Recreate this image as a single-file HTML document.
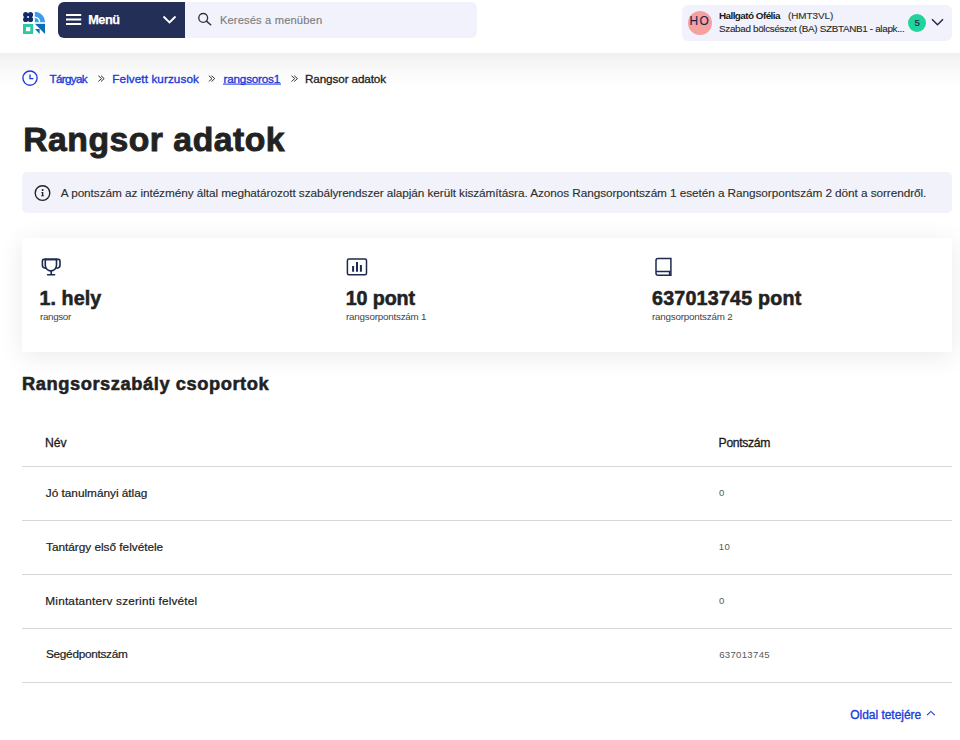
<!DOCTYPE html>
<html><head><meta charset="utf-8">
<style>
*{box-sizing:border-box;margin:0;padding:0}
html,body{width:960px;height:740px;overflow:hidden;background:#fff;font-family:"Liberation Sans",sans-serif;color:#222}
.t{position:absolute;white-space:nowrap;line-height:1}
svg{position:absolute;left:0;top:0;overflow:visible}
#hdr{position:absolute;left:0;top:0;width:960px;height:53px;background:#fff}
#shd{position:absolute;left:0;top:53px;width:960px;height:34px;background:linear-gradient(#f0f0f0,#f7f7f7 35%,#fcfcfc 70%,#fff)}
#menu{position:absolute;left:58px;top:2px;width:127px;height:36px;background:#232f56;border-radius:6px 0 0 6px}
#search{position:absolute;left:185px;top:2px;width:292px;height:36px;background:#f1f2fb;border-radius:0 6px 6px 0}
#user{position:absolute;left:682px;top:5px;width:270px;height:36px;background:#f1f2fb;border-radius:6px}
#info{position:absolute;left:22px;top:172px;width:930px;height:41px;background:#f1f2fa;border-radius:5px}
#card{position:absolute;left:22px;top:238px;width:930px;height:114px;background:#fff;box-shadow:0 4px 24px rgba(0,0,0,0.085)}
.line{position:absolute;left:22px;width:930px;height:1px;background:#d6d6d6}
</style></head><body>
<div id="hdr">
  <div id="menu"></div>
  <div id="search"></div>
  <div id="user"></div>
</div>
<div id="shd"></div>
<div id="info"></div>
<div id="card"></div>
<div class="line" style="top:466px"></div>
<div class="line" style="top:520px"></div>
<div class="line" style="top:574px"></div>
<div class="line" style="top:628px"></div>
<div class="line" style="top:682px"></div>
<svg width="960" height="740">
  <!-- logo -->
  <g fill="#13296b">
    <circle cx="25.7" cy="14.7" r="2.6"/><circle cx="30.5" cy="14.7" r="2.6"/>
    <circle cx="25.7" cy="19.4" r="2.6"/><circle cx="30.5" cy="19.4" r="2.6"/>
    <rect x="25.7" y="14.7" width="4.8" height="4.7"/>
  </g>
  <circle cx="28.1" cy="17.05" r="0.95" fill="#fff"/>
  <path d="M34.8 11.8 A10.2 10.2 0 0 1 45 22 L34.8 22 Z" fill="#3c9dea"/>
  <path d="M34.8 16.5 A5.5 5.5 0 0 1 40.3 22 L38.8 22 A4 4 0 0 0 34.8 18 Z" fill="#fff"/>
  <rect x="34.8" y="22" width="10.2" height="1.8" fill="#d3e3f1"/>
  <rect x="23" y="24" width="10.2" height="10" fill="#2dcaa1"/>
  <rect x="26" y="27" width="4.3" height="4.2" fill="#fff"/>
  <path d="M35.1 24 L45 24 L45 33.9 Z" fill="#0b6db6"/>
  <path d="M35.1 29 L39.6 29 L39.6 34 Z" fill="#0b6db6"/>
  <!-- hamburger -->
  <path d="M66 15.1 H81.2 M66 19.5 H81.2 M66 23.9 H81.2" stroke="#fff" stroke-width="2"/>
  <path d="M163.5 16.5 L169.5 22.5 L175.5 16.5" fill="none" stroke="#fff" stroke-width="1.9"/>
  <!-- search icon -->
  <circle cx="203.2" cy="17.9" r="4.4" fill="none" stroke="#333" stroke-width="1.35"/>
  <path d="M206.4 21.1 L210.7 24.8" stroke="#333" stroke-width="1.5" stroke-linecap="round"/>
  <!-- avatar -->
  <circle cx="700" cy="23" r="12" fill="#f4a19f"/>
  <circle cx="917" cy="23" r="9" fill="#1fd39b"/>
  <path d="M932 19.3 L937.5 24.8 L943 19.3" fill="none" stroke="#222a4a" stroke-width="1.45"/>
  <!-- clock -->
  <circle cx="30" cy="78.1" r="7.1" fill="none" stroke="#1a3bdb" stroke-width="1.35"/>
  <path d="M30 74.4 V78.7 H33.4" fill="none" stroke="#1a3bdb" stroke-width="1.3"/>
  <!-- separators -->
  <g fill="none" stroke="#333" stroke-width="1.0">
    <path d="M98.3 75.7 L101.5 78.6 L98.3 81.5 M101.0 75.7 L104.2 78.6 L101.0 81.5"/>
    <path d="M208.8 75.7 L212.0 78.6 L208.8 81.5 M211.5 75.7 L214.7 78.6 L211.5 81.5"/>
    <path d="M291.5 75.7 L294.7 78.6 L291.5 81.5 M294.2 75.7 L297.4 78.6 L294.2 81.5"/>
  </g>
  <rect x="223" y="83.6" width="58" height="1" fill="#1a3bdb"/>
  <!-- info icon -->
  <circle cx="42.5" cy="193" r="7.3" fill="none" stroke="#222" stroke-width="1.35"/>
  <circle cx="42.6" cy="189.9" r="1" fill="#222"/>
  <path d="M41.3 191.9 H43.3 V195.4 H44 V196.3 H41 V195.4 H41.9 V192.7 H41.3 Z" fill="#222"/>
  <!-- trophy -->
  <g fill="none" stroke="#1e2a50" stroke-width="1.6" stroke-linejoin="round" stroke-linecap="round">
    <path d="M45.3 259.4 H58.5 Q60 259.4 60 260.9 V265.3 C60 267 59 268 57 268.2"/>
    <path d="M56.5 259.4 H43.9 Q42.4 259.4 42.4 260.9 V265.3 C42.4 267 43.4 268 45.4 268.2"/>
    <path d="M45.3 259.4 V265.3 A5.6 5.6 0 0 0 56.5 265.3 V259.4"/>
    <path d="M51.2 270.9 V274.7 M47.6 274.7 H54.6"/>
  </g>
  <!-- chart -->
  <rect x="347.4" y="259.1" width="19.1" height="15.6" rx="1.5" fill="none" stroke="#1e2a50" stroke-width="1.5"/>
  <path d="M353.1 266.1 V271.7 M357 262.1 V271.7 M360.9 265.1 V271.7" stroke="#1e2a50" stroke-width="2"/>
  <!-- book -->
  <g fill="none" stroke="#1e2a50" stroke-width="1.5" stroke-linejoin="miter">
    <path d="M658 258.4 H670.9 V275.3 H658 A2 2 0 0 1 656 273.3 V260.4 A2 2 0 0 1 658 258.4 Z"/>
    <path d="M656 271.6 H670.9 M669.6 271.6 V275.3"/>
  </g>
  <!-- caret up -->
  <path d="M927 715.2 L930.9 711.4 L934.8 715.2" fill="none" stroke="#1a3bdb" stroke-width="1.1"/>
</svg>
<div class="t" style="left:88.20px;top:14.15px;font-size:12.7px;font-weight:bold;color:#fff;letter-spacing:-0.467px;-webkit-text-stroke:0.25px #fff;">Menü</div>
<div class="t" style="left:219.90px;top:14.92px;font-size:11.2px;font-weight:normal;color:#7c7c7c;letter-spacing:0.131px;-webkit-text-stroke:0.12px #7c7c7c;">Keresés a menüben</div>
<div class="t" style="left:689.40px;top:15.83px;font-size:11.9px;font-weight:normal;color:#1c2450;letter-spacing:1.600px;-webkit-text-stroke:0.15px #1c2450;">HO</div>
<div class="t" style="left:718.90px;top:10.92px;font-size:9.9px;font-weight:bold;color:#1a1a1a;letter-spacing:-0.536px;">Hallgató Ofélia</div>
<div class="t" style="left:788.00px;top:10.92px;font-size:9.9px;font-weight:normal;color:#333;letter-spacing:-0.029px;-webkit-text-stroke:0.15px #333;">(HMT3VL)</div>
<div class="t" style="left:719.00px;top:24.22px;font-size:9.9px;font-weight:normal;color:#262626;letter-spacing:-0.324px;-webkit-text-stroke:0.1px #262626;">Szabad bölcsészet (BA) SZBTANB1 - alapk...</div>
<div class="t" style="left:914.60px;top:18.37px;font-size:9.6px;font-weight:normal;color:#1c2450;letter-spacing:0.000px;-webkit-text-stroke:0.2px #1c2450;">5</div>
<div class="t" style="left:49.40px;top:73.30px;font-size:11.7px;font-weight:normal;color:#1a3bdb;letter-spacing:-0.650px;-webkit-text-stroke:0.35px #1a3bdb;">Tárgyak</div>
<div class="t" style="left:112.30px;top:73.30px;font-size:11.7px;font-weight:normal;color:#1a3bdb;letter-spacing:0.097px;-webkit-text-stroke:0.35px #1a3bdb;">Felvett kurzusok</div>
<div class="t" style="left:223.50px;top:73.30px;font-size:11.7px;font-weight:normal;color:#1a3bdb;letter-spacing:-0.189px;-webkit-text-stroke:0.35px #1a3bdb;">rangsoros1</div>
<div class="t" style="left:305.00px;top:73.30px;font-size:11.7px;font-weight:normal;color:#222;letter-spacing:-0.108px;-webkit-text-stroke:0.3px #222;">Rangsor adatok</div>
<div class="t" style="left:23.20px;top:122.77px;font-size:33.7px;font-weight:bold;color:#222;letter-spacing:0.523px;-webkit-text-stroke:0.9px #222;">Rangsor adatok</div>
<div class="t" style="left:60.80px;top:187.91px;font-size:11.8px;font-weight:normal;color:#2e2e2e;letter-spacing:-0.075px;-webkit-text-stroke:0.12px #2e2e2e;">A pontszám az intézmény által meghatározott szabályrendszer alapján került kiszámításra. Azonos Rangsorpontszám 1 esetén a Rangsorpontszám 2 dönt a sorrendről.</div>
<div class="t" style="left:39.50px;top:288.52px;font-size:19.7px;font-weight:bold;color:#222;letter-spacing:0.067px;-webkit-text-stroke:0.55px #222;">1. hely</div>
<div class="t" style="left:40.00px;top:311.90px;font-size:9.8px;font-weight:normal;color:#444;letter-spacing:-0.333px;">rangsor</div>
<div class="t" style="left:345.80px;top:288.52px;font-size:19.7px;font-weight:bold;color:#222;letter-spacing:-0.133px;-webkit-text-stroke:0.55px #222;">10 pont</div>
<div class="t" style="left:346.00px;top:311.90px;font-size:9.8px;font-weight:normal;color:#444;letter-spacing:-0.212px;">rangsorpontszám 1</div>
<div class="t" style="left:652.00px;top:288.52px;font-size:19.7px;font-weight:bold;color:#222;letter-spacing:0.200px;-webkit-text-stroke:0.55px #222;">637013745 pont</div>
<div class="t" style="left:652.00px;top:311.90px;font-size:9.8px;font-weight:normal;color:#444;letter-spacing:-0.200px;">rangsorpontszám 2</div>
<div class="t" style="left:22.00px;top:374.61px;font-size:18.3px;font-weight:bold;color:#222;letter-spacing:0.565px;-webkit-text-stroke:0.55px #222;">Rangsorszabály csoportok</div>
<div class="t" style="left:44.90px;top:437.07px;font-size:12.2px;font-weight:normal;color:#1a1a1a;letter-spacing:0.000px;-webkit-text-stroke:0.3px #1a1a1a;">Név</div>
<div class="t" style="left:718.60px;top:436.97px;font-size:12.2px;font-weight:normal;color:#1a1a1a;letter-spacing:-0.343px;-webkit-text-stroke:0.3px #1a1a1a;">Pontszám</div>
<div class="t" style="left:45.80px;top:487.51px;font-size:11.8px;font-weight:normal;color:#222;letter-spacing:-0.006px;-webkit-text-stroke:0.2px #1a1a1a;">Jó tanulmányi átlag</div>
<div class="t" style="left:718.90px;top:488.37px;font-size:9.6px;font-weight:normal;color:#5a5a5a;letter-spacing:0.000px;">0</div>
<div class="t" style="left:46.00px;top:541.51px;font-size:11.8px;font-weight:normal;color:#222;letter-spacing:-0.009px;-webkit-text-stroke:0.2px #1a1a1a;">Tantárgy első felvétele</div>
<div class="t" style="left:718.70px;top:542.37px;font-size:9.6px;font-weight:normal;color:#5a5a5a;letter-spacing:0.600px;">10</div>
<div class="t" style="left:45.30px;top:595.51px;font-size:11.8px;font-weight:normal;color:#222;letter-spacing:0.197px;-webkit-text-stroke:0.2px #1a1a1a;">Mintatanterv szerinti felvétel</div>
<div class="t" style="left:718.90px;top:596.37px;font-size:9.6px;font-weight:normal;color:#5a5a5a;letter-spacing:0.000px;">0</div>
<div class="t" style="left:46.00px;top:649.31px;font-size:11.8px;font-weight:normal;color:#222;letter-spacing:-0.292px;-webkit-text-stroke:0.2px #1a1a1a;">Segédpontszám</div>
<div class="t" style="left:719.20px;top:650.17px;font-size:9.6px;font-weight:normal;color:#5a5a5a;letter-spacing:0.300px;">637013745</div>
<div class="t" style="left:850.30px;top:708.94px;font-size:12px;font-weight:normal;color:#1a3bdb;letter-spacing:-0.038px;-webkit-text-stroke:0.35px #1a3bdb;">Oldal tetejére</div>
</body></html>
